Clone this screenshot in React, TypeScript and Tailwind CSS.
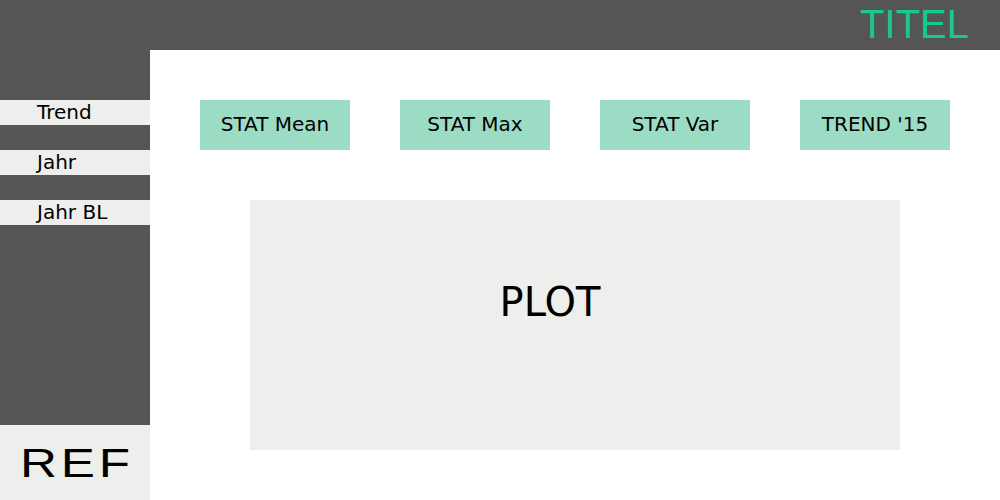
import React from 'react'

const menu = ['Trend', 'Jahr', 'Jahr BL']
const stats = ['STAT Mean', 'STAT Max', 'STAT Var', "TREND '15"]

export default function App() {
  return (
    <div className="w-[1000px] h-[500px] flex flex-col bg-white overflow-hidden font-['DejaVu_Sans',sans-serif] text-black">
      <header className="h-[50px] bg-[#555555] flex items-center justify-end pr-[31px] pb-[3px]">
        <span className="font-['Liberation_Sans',Arial,sans-serif] text-[40px] leading-none text-[#14cc8a]">TITEL</span>
      </header>
      <div className="flex flex-1">
        <aside className="w-[150px] flex flex-col">
          <div className="flex-1 bg-[#555555] pt-[50px] flex flex-col gap-[25px]">
            {menu.map((m) => (
              <div key={m} className="h-[25px] bg-[#eeeeec] flex items-center pl-[37px] pb-[1px] text-[20px] leading-none">
                {m}
              </div>
            ))}
          </div>
          <div className="h-[75px] bg-[#eeeeec] flex items-center justify-center">
            <span className="font-['Liberation_Sans',Arial,sans-serif] text-[40px] leading-none tracking-[3px] pl-[3px] inline-block scale-x-[1.28]">REF</span>
          </div>
        </aside>
        <main className="flex-1 pt-[50px] pl-[50px]">
          <div className="flex gap-[50px]">
            {stats.map((s) => (
              <div key={s} className="w-[150px] h-[50px] bg-[#9cdcc5] flex items-center justify-center pb-[2px] text-[20px] leading-none">
                {s}
              </div>
            ))}
          </div>
          <div className="mt-[50px] ml-[50px] w-[650px] h-[250px] bg-[#eeeeec] flex items-center justify-center pb-[46px] pr-[50px]">
            <span className="text-[40px] leading-none">PLOT</span>
          </div>
        </main>
      </div>
    </div>
  )
}
